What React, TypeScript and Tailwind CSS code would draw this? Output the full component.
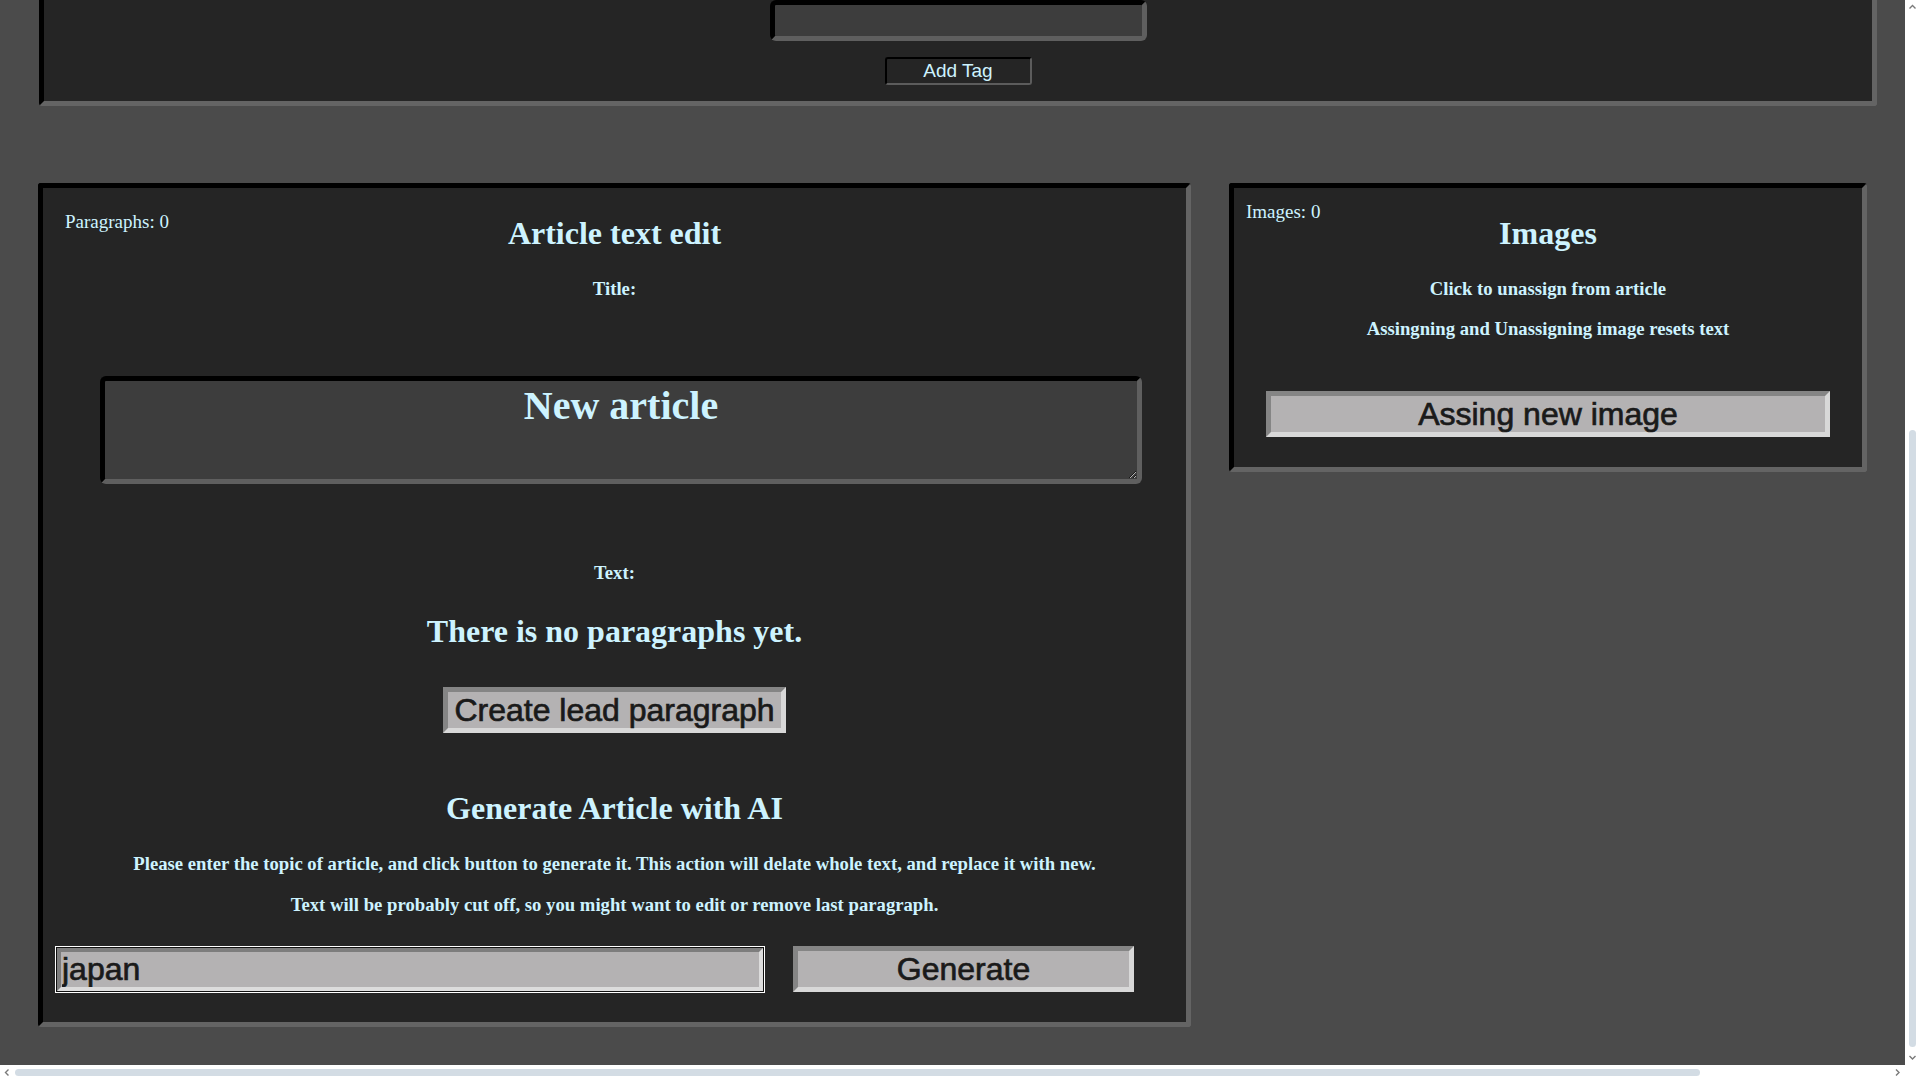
import React from "react";

const serif = "font-['Liberation_Serif','Times_New_Roman',serif]";
const sans = "font-['Liberation_Sans',Arial,sans-serif]";

function Chevron({ dir }: { dir: "up" | "down" | "left" | "right" }) {
  const paths: Record<string, string> = {
    up: "M1.5 5.5 L4.5 2.5 L7.5 5.5",
    down: "M1.5 3 L4.5 6 L7.5 3",
    left: "M5.5 1.5 L2.5 4.5 L5.5 7.5",
    right: "M3 1.5 L6 4.5 L3 7.5",
  };
  return (
    <svg width="9" height="9" viewBox="0 0 9 9">
      <path d={paths[dir]} fill="none" stroke="#7a7a7a" strokeWidth="1.4" />
    </svg>
  );
}

export default function App() {
  const cyan = "text-[#cdf3ff]";
  const panelBorder =
    "border-[5px] border-t-black border-l-black border-b-[#646464] border-r-[#646464] rounded-[3px] bg-[#252525]";
  const greyBtn =
    "bg-[#b4b2b3] border-[5px] border-t-[#858585] border-l-[#858585] border-b-[#d8d8d8] border-r-[#d8d8d8] text-[#1a1a1a] [-webkit-text-stroke:0.7px_#1a1a1a] text-[32px] leading-[36px] " +
    sans;

  return (
    <div className="w-[1920px] h-[1080px] overflow-hidden grid grid-cols-[1905px_15px] grid-rows-[1065px_15px] bg-white">
      {/* page content */}
      <div className="bg-[#4b4b4b] overflow-hidden flex flex-col">
        {/* top panel (cut off by scroll) */}
        <div className="ml-[39px] w-[1838px] border-[5px] border-t-0 border-l-black border-b-[#646464] border-r-[#646464] rounded-b-[3px] bg-[#252525] flex flex-col items-center pb-[16px]">
          <div className="w-[377px] h-[41px] rounded-[6px] border-[5px] border-t-black border-l-black border-b-[#5f5f5f] border-r-[#5f5f5f] bg-[#3d3d3d]" />
          <button
            className={`mt-[16px] w-[147px] h-[28px] rounded-[3px] border-2 border-t-black border-l-black border-b-[#5c5c5c] border-r-[#5c5c5c] bg-[#252525] ${cyan} text-[19px] leading-[22px] ${sans}`}
          >
            Add Tag
          </button>
        </div>

        {/* lower panels */}
        <div className="flex items-start mt-[77px]">
          {/* article text edit */}
          <div className={`ml-[38px] w-[1153px] h-[844px] ${panelBorder} relative flex flex-col items-center ${serif} ${cyan}`}>
            <div className="absolute left-[22px] top-[23px] text-[19px] leading-[22px]">Paragraphs: 0</div>
            <h1 className="mt-[27px] text-[32px] leading-[37px] font-bold">Article text edit</h1>
            <div className="mt-[26px] text-[18.7px] leading-[22px] font-bold">Title:</div>
            <textarea
              defaultValue="New article"
              className={`self-start ml-[57px] mt-[76px] w-[1042px] h-[108px] rounded-[6px] border-[5px] border-t-black border-l-black border-b-[#5f5f5f] border-r-[#5f5f5f] bg-[#3d3d3d] ${cyan} text-center text-[40px] leading-[46px] font-bold pt-[2px] outline-none ${serif}`}
            />
            <div className="mt-[78px] text-[18.7px] leading-[22px] font-bold">Text:</div>
            <h2 className="mt-[29px] text-[32px] leading-[37px] font-bold">There is no paragraphs yet.</h2>
            <button className={`mt-[37px] w-[343px] h-[46px] ${greyBtn}`}>Create lead paragraph</button>
            <h2 className="mt-[57px] text-[32px] leading-[37px] font-bold">Generate Article with AI</h2>
            <p className="mt-[26px] text-[18.7px] leading-[22px] font-bold">
              Please enter the topic of article, and click button to generate it. This action will delate whole text, and replace it with new.
            </p>
            <p className="mt-[19px] text-[18.7px] leading-[22px] font-bold">
              Text will be probably cut off, so you might want to edit or remove last paragraph.
            </p>
            <div className="self-start ml-[14px] mt-[30px] flex items-center">
              <input
                defaultValue="japan"
                className={`w-[706px] h-[43px] bg-[#b4b2b3] border-[4px] border-t-[#7d7d7d] border-l-[#7d7d7d] border-b-[#dcdcdc] border-r-[#dcdcdc] shadow-[0_0_0_1px_#111,0_0_0_2px_#fff] text-[#1a1a1a] [-webkit-text-stroke:0.7px_#1a1a1a] text-[32px] leading-[35px] pl-[1px] outline-none ${sans}`}
              />
              <button className={`ml-[30px] w-[341px] h-[46px] ${greyBtn}`}>Generate</button>
            </div>
          </div>

          {/* images */}
          <div className={`ml-[38px] w-[638px] h-[289px] ${panelBorder} relative flex flex-col items-center ${serif} ${cyan}`}>
            <div className="absolute left-[12px] top-[13px] text-[19px] leading-[22px]">Images: 0</div>
            <h1 className="mt-[27px] text-[32px] leading-[37px] font-bold">Images</h1>
            <div className="mt-[26px] text-[18.7px] leading-[22px] font-bold">Click to unassign from article</div>
            <div className="mt-[18px] text-[18.7px] leading-[22px] font-bold">Assingning and Unassigning image resets text</div>
            <button className={`mt-[51px] w-[564px] h-[46px] ${greyBtn}`}>Assing new image</button>
          </div>
        </div>
      </div>

      {/* vertical scrollbar */}
      <div className="bg-white flex flex-col items-center">
        <div className="h-[15px] flex items-center justify-center">
          <Chevron dir="up" />
        </div>
        <div className="flex-1 w-full flex flex-col items-center">
          <div className="mt-[415px] w-[7px] h-[617px] rounded-full bg-[#d3dce4]" />
        </div>
        <div className="h-[15px] flex items-center justify-center">
          <Chevron dir="down" />
        </div>
      </div>

      {/* horizontal scrollbar */}
      <div className="bg-white flex items-center">
        <div className="w-[15px] flex items-center justify-center">
          <Chevron dir="left" />
        </div>
        <div className="flex-1 h-full flex items-center">
          <div className="w-[1685px] h-[7px] rounded-full bg-[#d3dce4]" />
        </div>
        <div className="w-[15px] flex items-center justify-center">
          <Chevron dir="right" />
        </div>
      </div>

      {/* corner */}
      <div className="bg-white" />
    </div>
  );
}
